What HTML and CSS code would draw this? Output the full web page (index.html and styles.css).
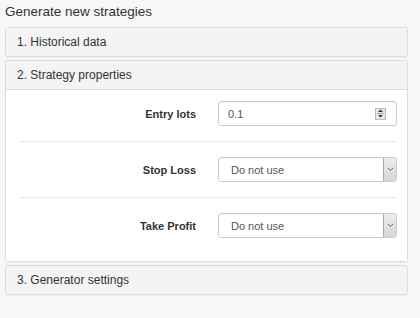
FILE: index.html
```html
<!DOCTYPE html>
<html>
<head>
<meta charset="utf-8">
<link rel="stylesheet" href="styles.css">
</head>
<body>
<div class="page">
  <h1 class="title">Generate new strategies</h1>
  <div class="panel">
    <div class="panel-head">1. Historical data</div>
  </div>
  <div class="panel">
    <div class="panel-head open">2. Strategy properties</div>
    <div class="panel-body">
      <div class="row">
        <label class="lbl">Entry lots</label>
        <div class="field">
          <span class="val">0.1</span>
          <span class="spin">
            <svg width="9" height="11" viewBox="0 0 9 11"><path d="M2 4 L4.5 1.5 L7 4 Z" fill="#333"/><line x1="1" y1="5.5" x2="8" y2="5.5" stroke="#aaa"/><path d="M2 7 L4.5 9.5 L7 7 Z" fill="#333"/></svg>
          </span>
        </div>
      </div>
      <div class="row">
        <label class="lbl">Stop Loss</label>
        <div class="field select">
          <span class="val sel">Do not use</span>
          <span class="arrow"><svg width="7" height="5" viewBox="0 0 7 5"><path d="M1 1 L3.5 3.5 L6 1" fill="none" stroke="#666" stroke-width="1"/></svg></span>
        </div>
      </div>
      <div class="row">
        <label class="lbl">Take Profit</label>
        <div class="field select">
          <span class="val sel">Do not use</span>
          <span class="arrow"><svg width="7" height="5" viewBox="0 0 7 5"><path d="M1 1 L3.5 3.5 L6 1" fill="none" stroke="#666" stroke-width="1"/></svg></span>
        </div>
      </div>
    </div>
  </div>
  <div class="panel">
    <div class="panel-head">3. Generator settings</div>
  </div>
</div>
</body>
</html>
```

FILE: styles.css
```css
html, body {
  margin: 0;
  padding: 0;
  background: #f7f7f8;
  font-family: "Liberation Sans", Arial, sans-serif;
  color: #333;
}
.page {
  padding: 0 0 0 5px;
  width: 403px;
}
.title {
  margin: 0;
  height: 27px;
  line-height: 24px;
  font-size: 13.5px;
  font-weight: normal;
  color: #333;
}
.panel {
  border: 1px solid #dcdcdc;
  border-radius: 3px;
  background: #fff;
  margin-bottom: 3px;
  box-shadow: 0 1px 1px rgba(0,0,0,0.04);
}
.panel-head {
  height: 28px;
  line-height: 28px;
  padding: 0 11px;
  background: #f4f4f4;
  font-size: 12px;
  color: #333;
  border-radius: 3px;
}
.panel-head.open {
  border-bottom: 1px solid #dedede;
  border-radius: 3px 3px 0 0;
}
.panel-body {
  padding: 11px 10px 23px 13px;
  background: #fff;
}
.row {
  display: flex;
  align-items: center;
}
.row + .row {
  border-top: 1px solid #e8e8e8;
  margin-top: 15px;
  padding-top: 15px;
}
.lbl {
  width: 177px;
  text-align: right;
  font-size: 11px;
  font-weight: bold;
  color: #333;
  margin-right: 22px;
}
.field {
  box-sizing: border-box;
  width: 179px;
  height: 25px;
  border: 1px solid #ccc;
  border-radius: 3px;
  background: #fff;
  display: flex;
  align-items: center;
  box-shadow: inset 0 1px 1px rgba(0,0,0,0.05);
}
.val {
  flex: 1;
  padding-left: 9px;
  font-size: 11px;
  color: #555;
}
.val.sel {
  padding-left: 12px;
}
.spin {
  display: flex;
  align-items: center;
  justify-content: center;
  box-sizing: border-box;
  width: 11px;
  height: 12px;
  margin-right: 10px;
  border: 1px solid #bbb;
  background: #e8e8e8;
}
.select {
  align-items: stretch;
}
.select .val {
  display: flex;
  align-items: center;
}
.arrow {
  width: 12px;
  display: flex;
  align-items: center;
  justify-content: center;
  background: linear-gradient(#ececec, #d6d6d6);
  border-left: 1px solid #a8a8a8;
  border-radius: 0 2px 2px 0;
}
```
